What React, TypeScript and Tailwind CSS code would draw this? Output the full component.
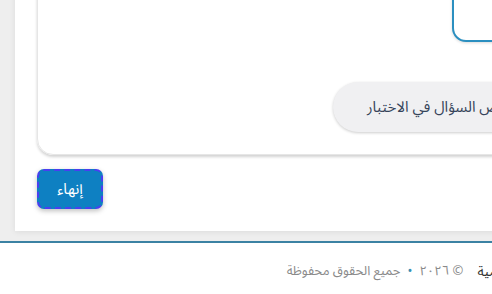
import React from "react";

const font = { fontFamily: '"Noto Sans Arabic", "Noto Sans", "DejaVu Sans", sans-serif' };

export default function App() {
  return (
    <div className="w-[492px] h-[294px] overflow-hidden bg-white" style={font}>
      <div className="w-[600px] -mt-[82px]" dir="rtl">
        {/* main area */}
        <div className="bg-[#eeeeee] pl-[15px] pr-[15px] pb-[10px]">
          <div className="bg-white shadow-[0_1px_6px_rgba(0,0,0,0.08)] pl-[22px] pr-[22px] pt-[20px] pb-[22px]">
            {/* card */}
            <div className="rounded-2xl border border-[#e6e6e6] shadow-[0_2px_3px_rgba(0,0,0,0.18)] pt-[20px] pb-[22px] pr-[24px] pl-[24px] flex flex-col items-start">
              <div className="w-[86px] h-[83px] rounded-[14px] border-2 border-[#2b8fc0] bg-white shadow-[0_1px_3px_rgba(0,0,0,0.15)] flex flex-col justify-start p-[10px]">
                <div className="h-[20px] rounded-md bg-[#f1f1f1]" />
              </div>
              <div className="mt-[40px] w-[205px] h-[50px] rounded-full bg-[#f0f0f2] shadow-[0_1px_3px_rgba(0,0,0,0.2)] flex items-center pr-[26px] text-[15px] text-[#36445a] whitespace-nowrap">
                عرض السؤال في الاختبار
              </div>
            </div>
            {/* finish button row */}
            <div className="flex justify-end mt-[14px]">
              <button className="w-[66px] h-[40px] rounded-[7px] border-2 border-dashed border-[#4a3ff0] bg-[#0e80c2] text-white text-[15px] shadow-[0_2px_5px_rgba(0,0,0,0.25)] flex items-center justify-center">
                إنهاء
              </button>
            </div>
          </div>
        </div>
        {/* footer */}
        <footer className="border-t-2 border-[#3b82a3] bg-white pt-[18px] pb-[20px] pr-[30px] flex items-center gap-[14px] text-[13px] whitespace-nowrap">
          <span className="text-[#333333] text-[14px]">المنصة التعليمية</span>
          <span className="text-[#8a8a8a] flex items-center gap-[7px]">
            <span>© ٢٠٢٦</span>
            <span className="text-[#3a8fb3]">•</span>
            <span>جميع الحقوق محفوظة</span>
          </span>
        </footer>
      </div>
    </div>
  );
}
